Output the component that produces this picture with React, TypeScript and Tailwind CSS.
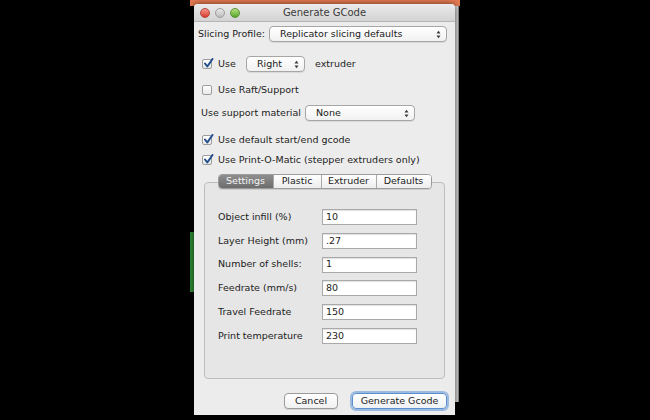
import React from 'react'

const font = { fontFamily: '"DejaVu Sans", "Liberation Sans", sans-serif' }

function Arrows() {
  return (
    <svg width="5" height="9" viewBox="0 0 5 9" className="shrink-0">
      <path d="M0.5 3.5 L2.5 0.8 L4.5 3.5 Z" fill="#3a3a3a" />
      <path d="M0.5 5.5 L2.5 8.2 L4.5 5.5 Z" fill="#3a3a3a" />
    </svg>
  )
}

function Select({ value, className }: { value: string; className: string }) {
  return (
    <div
      className={`h-[16px] flex items-center justify-between pl-[10px] pr-[5px] rounded-[4px] border border-[#a6a6a6] bg-gradient-to-b from-white to-[#f1f1f1] shadow-[0_1px_0_rgba(0,0,0,0.08)] ${className}`}
    >
      <span className="text-[#1a1a1a]">{value}</span>
      <Arrows />
    </div>
  )
}

function Check({ checked }: { checked: boolean }) {
  return (
    <div className="relative w-[10px] h-[10px] shrink-0 rounded-[2px] border border-[#9c9c9c] bg-gradient-to-b from-white to-[#e9e9e9]">
      {checked && (
        <svg width="11" height="11" viewBox="0 0 11 11" className="absolute left-[0px] top-[-2px]">
          <path d="M2 5.5 L4.3 8.5 L9.5 1" stroke="#234f8c" strokeWidth="2" fill="none" strokeLinecap="round" strokeLinejoin="round" />
        </svg>
      )}
    </div>
  )
}

function CheckRow({ checked, label, className }: { checked: boolean; label: string; className: string }) {
  return (
    <div className={`h-[16px] flex items-center gap-[6px] pl-[8px] ${className}`}>
      <Check checked={checked} />
      <span>{label}</span>
    </div>
  )
}

const settings = [
  { label: 'Object infill (%)', value: '10' },
  { label: 'Layer Height (mm)', value: '.27' },
  { label: 'Number of shells:', value: '1' },
  { label: 'Feedrate (mm/s)', value: '80' },
  { label: 'Travel Feedrate', value: '150' },
  { label: 'Print temperature', value: '230' },
]

const tabs = ['Settings', 'Plastic', 'Extruder', 'Defaults']
const tabWidths = ['w-[54px]', 'w-[48px]', 'w-[55px]', 'w-[55px]']

export default function App() {
  return (
    <div className="relative w-[650px] h-[420px] bg-black overflow-hidden text-[9.5px] text-[#1c1c1c]" style={font}>
      {/* desktop behind the dialog */}
      <div className="absolute left-[190px] top-0 w-[270px] h-[6px] bg-[#e47a52]" />
      <div className="absolute left-[453px] top-[6px] w-[6px] h-[396px] bg-[#cfcfcf] border-r border-[#8a8a8a]" />
      <div className="absolute left-[190px] top-[232px] w-[4px] h-[60px] bg-[#2f8a34]" />

      {/* dialog */}
      <div className="absolute left-[194px] top-[4px] w-[261px] h-[411px] flex flex-col bg-[#ececec] rounded-t-[4px] shadow-[0_0_6px_rgba(0,0,0,0.6)]">
        {/* title bar */}
        <div className="relative h-[18px] shrink-0 flex items-center justify-center rounded-t-[4px] bg-gradient-to-b from-[#ebebeb] to-[#d3d3d3] border-b border-[#b5b5b5]">
          <div className="absolute left-[6px] top-[4px] flex gap-[5px]">
            <div className="w-[10px] h-[10px] rounded-full bg-gradient-to-b from-[#f4948a] to-[#d9352c] border border-[#b0463d]" />
            <div className="w-[10px] h-[10px] rounded-full bg-gradient-to-b from-[#e9e9e9] to-[#bdbdbd] border border-[#9d9d9d]" />
            <div className="w-[10px] h-[10px] rounded-full bg-gradient-to-b from-[#b6e07a] to-[#54a62a] border border-[#5b9238]" />
          </div>
          <span className="text-[10px] text-[#3b3b3b]">Generate GCode</span>
        </div>

        {/* slicing profile */}
        <div className="mt-[4px] h-[16px] flex items-center pl-[4px] pr-[8px]">
          <span className="w-[71px] shrink-0">Slicing Profile:</span>
          <Select value="Replicator slicing defaults" className="flex-1" />
        </div>

        {/* extruder */}
        <div className="mt-[14px] h-[16px] flex items-center pl-[8px]">
          <Check checked />
          <span className="ml-[6px] w-[28px]">Use</span>
          <Select value="Right" className="w-[59px]" />
          <span className="ml-[10px]">extruder</span>
        </div>

        <CheckRow checked={false} label="Use Raft/Support" className="mt-[10px]" />

        <div className="mt-[7px] h-[16px] flex items-center pl-[7px]">
          <span className="w-[104px] shrink-0">Use support material</span>
          <Select value="None" className="w-[110px]" />
        </div>

        <CheckRow checked label="Use default start/end gcode" className="mt-[11px]" />
        <CheckRow checked label="Use Print-O-Matic (stepper extruders only)" className="mt-[4px]" />

        {/* tab panel */}
        <div className="mt-[14px] mx-[10px] h-[197px] shrink-0 flex flex-col rounded-[4px] border border-[#bdbdbd] bg-[#e6e6e6]">
          <div className="-mt-[9px] self-center flex h-[15px] rounded-[4px] border border-[#9b9b9b] overflow-hidden shadow-[0_1px_0_rgba(0,0,0,0.1)]">
            {tabs.map((t, i) => (
              <div
                key={t}
                className={`${tabWidths[i]} flex items-center justify-center ${
                  i === 0
                    ? 'bg-gradient-to-b from-[#8f8f8f] to-[#6c6c6c] text-[#f4f4f4]'
                    : 'bg-gradient-to-b from-white to-[#ededed] text-[#1c1c1c]'
                } ${i > 0 ? 'border-l border-[#a9a9a9]' : ''}`}
              >
                {t}
              </div>
            ))}
          </div>

          <div className="mt-[20px] flex flex-col gap-[7.8px] pl-[13px]">
            {settings.map((s) => (
              <div key={s.label} className="h-[16px] flex items-center">
                <span className="w-[104px] shrink-0">{s.label}</span>
                <div className="w-[95px] h-[16px] flex items-center pl-[3px] bg-white border border-[#a9a9a9] shadow-[inset_0_1px_1px_rgba(0,0,0,0.12)]">
                  {s.value}
                </div>
              </div>
            ))}
          </div>
        </div>

        {/* buttons */}
        <div className="mt-[14px] flex justify-end gap-[14px] pr-[8px]">
          <div className="w-[54px] h-[16px] flex items-center justify-center rounded-[4px] border border-[#9a9a9a] bg-gradient-to-b from-white to-[#f0f0f0] shadow-[0_1px_0_rgba(0,0,0,0.1)]">
            Cancel
          </div>
          <div className="w-[95px] h-[16px] flex items-center justify-center rounded-[4px] border border-[#5b8fd0] bg-gradient-to-b from-white to-[#eef1f5] shadow-[0_0_0_2px_rgba(120,165,220,0.7)]">
            Generate Gcode
          </div>
        </div>
      </div>
    </div>
  )
}
